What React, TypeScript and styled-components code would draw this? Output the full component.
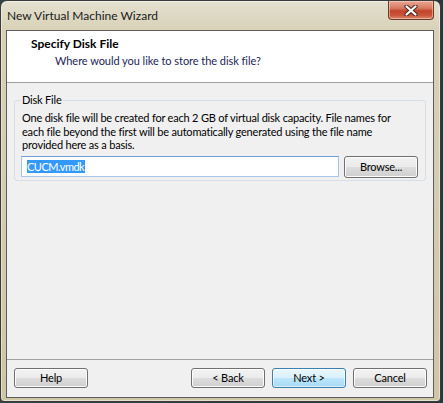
import React from 'react';
import styled, { createGlobalStyle } from 'styled-components';

const Global = createGlobalStyle`
  html, body { margin: 0; padding: 0; }
  body {
    background: linear-gradient(90deg, #33434a, #2a383e);
    width: 443px; height: 403px; overflow: hidden;
    font-family: "Segoe UI", Lato, "Liberation Sans", sans-serif;
    font-size: 12px;
    color: #000;
  }
  * { box-sizing: border-box; }
`;

const Window = styled.div`
  width: 441px;
  height: 402px;
  border: 1px solid #3b3b3b;
  border-radius: 7px 7px 4px 4px;
  background: linear-gradient(#e4e0d0, #d8d1b6 30px, #cfc6a4);
  padding: 0 6px 3px 5px;
  display: flex;
  flex-direction: column;
  box-shadow: inset 0 0 0 1px rgba(255,255,255,0.45);
`;

const TitleBar = styled.div`
  height: 29px;
  flex: none;
  display: flex;
  align-items: flex-start;
  justify-content: space-between;
  padding-left: 1px;
`;

const TitleText = styled.div`
  line-height: 16px;
  margin-top: 7px;
  color: #1a1a1a;
`;

const CloseButton = styled.div`
  width: 46px;
  height: 19px;
  border: 1px solid #6e3a30;
  border-top: none;
  border-radius: 0 0 4px 4px;
  background: linear-gradient(#e7a795 0%, #d77a62 40%, #c0442a 55%, #c9553a 80%, #dc8a6e 100%);
  display: flex;
  align-items: center;
  justify-content: center;
  box-shadow: inset 0 0 0 1px rgba(255,220,200,0.5);
`;

const Client = styled.div`
  height: 368px;
  flex: none;
  border: 1px solid #5d5d5d;
  background: #f0f0f0;
  display: flex;
  flex-direction: column;
  font-size: 11px;
  letter-spacing: -0.2px;
`;

const Header = styled.div`
  height: 52px;
  flex: none;
  background: #fff;
  border-bottom: 1px solid #a0a0a0;
  padding: 5px 0 0 24px;
`;

const HeaderTitle = styled.div`
  font-weight: bold;
  font-size: 12px;
  letter-spacing: 0;
  line-height: 16px;
`;

const HeaderSub = styled.div`
  line-height: 16px;
  margin-top: 1px;
  padding-left: 24px;
  letter-spacing: -0.05px;
  color: #1b2657;
`;

const Body = styled.div`
  flex: 1;
  padding: 9px 7px 0 7px;
`;

const Group = styled.fieldset`
  margin: 0;
  min-width: 0;
  padding: 3px 7px 2px 6px;
  border: 1px solid #d5dfe5;
  border-radius: 3px;
`;

const Legend = styled.legend`
  padding: 0 1px;
  line-height: 16px;
`;

const Para = styled.p`
  margin: 0 0 4px 1px;
  line-height: 13.5px;
  white-space: nowrap;
`;

const Row = styled.div`
  display: flex;
  align-items: center;
  gap: 5px;
`;

const TextBox = styled.div`
  flex: 1;
  height: 21px;
  border: 1px solid #a9c6e6;
  border-top-color: #6f9fd0;
  background: #fff;
  padding-left: 5px;
  display: flex;
  align-items: center;
`;

const Selected = styled.span`
  background: #3399ff;
  color: #fff;
  line-height: 13px;
  letter-spacing: -0.5px;
  padding: 0 1px 0 0;
`;

const Button = styled.div<{ $primary?: boolean }>`
  width: 74px;
  height: 20px;
  border: 1px solid ${p => (p.$primary ? '#3c7fb1' : '#707070')};
  border-radius: 3px;
  background: ${p =>
    p.$primary
      ? 'linear-gradient(#eaf6fd 0%, #d9f0fc 50%, #bee6fd 50%, #a7d9f5 100%)'
      : 'linear-gradient(#f2f2f2 0%, #ebebeb 50%, #dddddd 50%, #cfcfcf 100%)'};
  box-shadow: inset 0 0 0 1px ${p => (p.$primary ? 'rgba(255,255,255,0.6)' : '#fcfcfc')};
  display: flex;
  align-items: center;
  justify-content: center;
  line-height: 16px;
`;

const BrowseButton = styled(Button)`
  height: 22px;
`;

const Footer = styled.div`
  height: 38px;
  flex: none;
  border-top: 1px solid #a0a0a0;
  padding: 8px 6px 0 7px;
  display: flex;
  align-items: flex-start;
`;

const Spacer = styled.div`
  flex: 1;
`;

const NavGroup = styled.div`
  display: flex;
  gap: 7px;
`;

export default function App() {
  return (
    <>
      <Global />
      <Window>
        <TitleBar>
          <TitleText>New Virtual Machine Wizard</TitleText>
          <CloseButton>
            <svg width="14" height="11" viewBox="0 0 14 11">
              <path d="M2.5 1.5 L11.5 9.5 M11.5 1.5 L2.5 9.5" stroke="#4a2a28" strokeWidth="4.2" strokeLinecap="round" />
              <path d="M2.5 1.5 L11.5 9.5 M11.5 1.5 L2.5 9.5" stroke="#ffffff" strokeWidth="2.2" strokeLinecap="round" />
            </svg>
          </CloseButton>
        </TitleBar>
        <Client>
          <Header>
            <HeaderTitle>Specify Disk File</HeaderTitle>
            <HeaderSub>Where would you like to store the disk file?</HeaderSub>
          </Header>
          <Body>
            <Group>
              <Legend>Disk File</Legend>
              <Para>
                One disk file will be created for each 2 GB of virtual disk capacity. File names for
                <br />
                each file beyond the first will be automatically generated using the file name
                <br />
                provided here as a basis.
              </Para>
              <Row>
                <TextBox>
                  <Selected>CUCM.vmdk</Selected>
                </TextBox>
                <BrowseButton>Browse...</BrowseButton>
              </Row>
            </Group>
          </Body>
          <Footer>
            <Button>Help</Button>
            <Spacer />
            <NavGroup>
              <Button>&lt; Back</Button>
              <Button $primary>Next &gt;</Button>
              <Button>Cancel</Button>
            </NavGroup>
          </Footer>
        </Client>
      </Window>
    </>
  );
}
